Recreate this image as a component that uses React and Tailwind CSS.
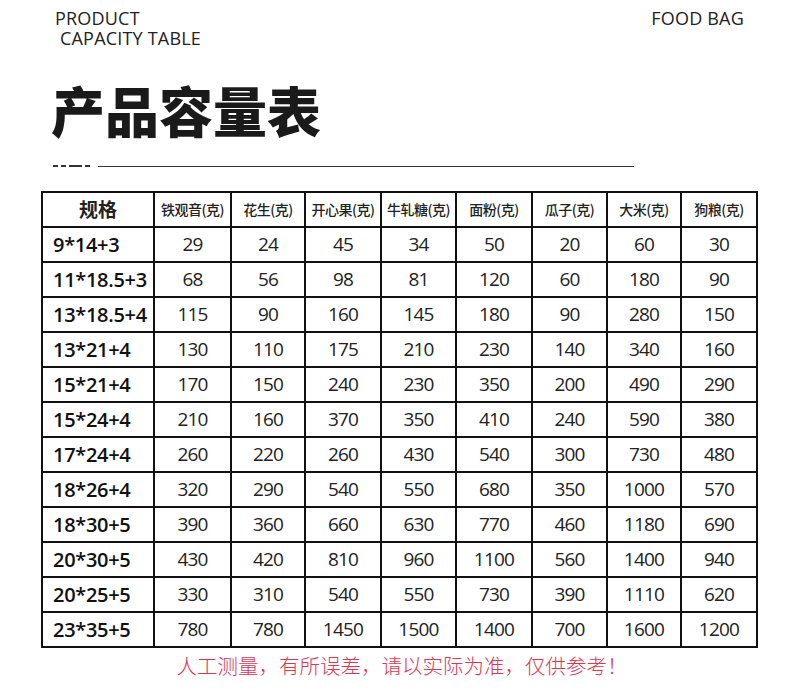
const headers = ['铁观音(克)', '花生(克)', '开心果(克)', '牛轧糖(克)', '面粉(克)', '瓜子(克)', '大米(克)', '狗粮(克)']

const rows = [
  ['9*14+3', 29, 24, 45, 34, 50, 20, 60, 30],
  ['11*18.5+3', 68, 56, 98, 81, 120, 60, 180, 90],
  ['13*18.5+4', 115, 90, 160, 145, 180, 90, 280, 150],
  ['13*21+4', 130, 110, 175, 210, 230, 140, 340, 160],
  ['15*21+4', 170, 150, 240, 230, 350, 200, 490, 290],
  ['15*24+4', 210, 160, 370, 350, 410, 240, 590, 380],
  ['17*24+4', 260, 220, 260, 430, 540, 300, 730, 480],
  ['18*26+4', 320, 290, 540, 550, 680, 350, 1000, 570],
  ['18*30+5', 390, 360, 660, 630, 770, 460, 1180, 690],
  ['20*30+5', 430, 420, 810, 960, 1100, 560, 1400, 940],
  ['20*25+5', 330, 310, 540, 550, 730, 390, 1110, 620],
  ['23*35+5', 780, 780, 1450, 1500, 1400, 700, 1600, 1200],
]

const colWidths = ['w-[112px]', 'w-[77px]', 'w-[74px]', 'w-[76px]', 'w-[75px]', 'w-[76px]', 'w-[75px]', 'w-[74px]', 'w-[76px]']

const cjk = "font-['Noto_Sans_CJK_SC',sans-serif]"

export default function App() {
  return (
    <div className="w-[790px] h-[692px] bg-white overflow-hidden relative text-[#111]">
      <div className="flex justify-between pl-[55px] pr-[46px] pt-[8px] font-['Open_Sans',sans-serif] text-[18px] leading-[20px] tracking-[0.2px] text-[#222]">
        <div>
          <div>PRODUCT</div>
          <div className="pl-[5px]">CAPACITY TABLE</div>
        </div>
        <div>FOOD BAG</div>
      </div>

      <h1 className={`${cjk} font-black text-[54px] leading-none pl-[51px] mt-[35px] text-[#1a1a1a]`}>
        产品容量表
      </h1>

      <div className="flex items-center pl-[53px] mt-[27px] h-[4px]">
        <span className="w-[5px] h-[2px] bg-[#333]" />
        <span className="w-[5px] h-[2px] bg-[#333] ml-[3px]" />
        <span className="w-[13px] h-[2px] bg-[#333] ml-[3px]" />
        <span className="w-[5px] h-[2px] bg-[#333] ml-[3px]" />
        <span className="w-[536px] h-px bg-[#333] ml-[8px]" />
      </div>

      <table className="ml-[41px] mt-[23px] border-collapse border-[2px] border-[#111] table-fixed w-[715px]">
        <thead>
          <tr className="h-[35px]">
            <th className={`${colWidths[0]} border-[2px] border-[#111] ${cjk} font-bold text-[19px] text-[#222]`}>规格</th>
            {headers.map((h, i) => (
              <th key={h} className={`${colWidths[i + 1]} border-[2px] border-[#111] ${cjk} font-medium text-[14px] tracking-[-0.5px] text-[#222] p-0`}>
                {h}
              </th>
            ))}
          </tr>
        </thead>
        <tbody>
          {rows.map((r) => (
            <tr key={r[0]} className="h-[35px]">
              <td className="border-[2px] border-[#111] pl-[10px] font-['Open_Sans',sans-serif] font-semibold text-[20px] tracking-[-0.3px] text-[#111] leading-none">
                {r[0]}
              </td>
              {r.slice(1).map((v, i) => (
                <td key={i} className="border-[2px] border-[#111] text-center font-['Open_Sans',sans-serif] text-[19px] tracking-[-0.8px] text-[#222] leading-none">
                  {v}
                </td>
              ))}
            </tr>
          ))}
        </tbody>
      </table>

      <p className={`${cjk} font-light text-[20.5px] text-[#e2344f] text-center mt-[4px] pl-[14px] leading-[26px]`}>
        人工测量，有所误差，请以实际为准，仅供参考！
      </p>
    </div>
  )
}
